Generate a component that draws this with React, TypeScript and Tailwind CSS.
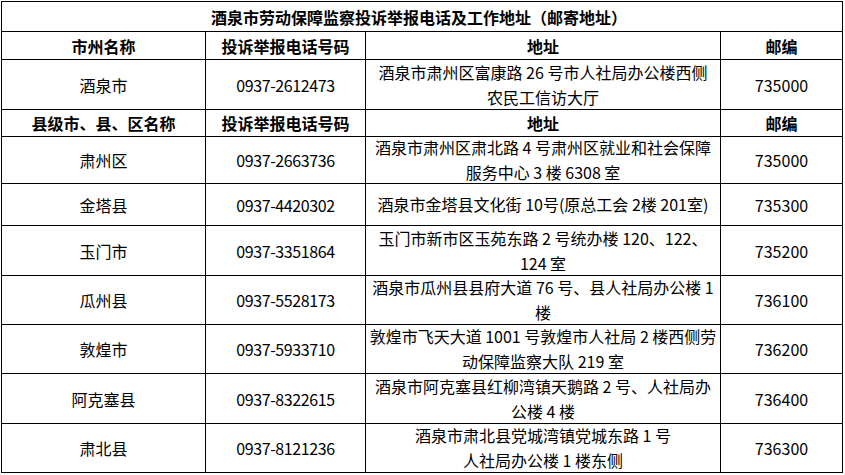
import React from "react";

type Row = { name: string; phone: string; addr: string[]; zip: string };

const rows: Row[] = [
  { name: "肃州区", phone: "0937-2663736", addr: ["酒泉市肃州区肃北路 4 号肃州区就业和社会保障", "服务中心 3 楼 6308 室"], zip: "735000" },
  { name: "金塔县", phone: "0937-4420302", addr: ["酒泉市金塔县文化街 10号(原总工会 2楼 201室)"], zip: "735300" },
  { name: "玉门市", phone: "0937-3351864", addr: ["玉门市新市区玉苑东路 2 号统办楼 120、122、", "124 室"], zip: "735200" },
  { name: "瓜州县", phone: "0937-5528173", addr: ["酒泉市瓜州县县府大道 76 号、县人社局办公楼 1", "楼"], zip: "736100" },
  { name: "敦煌市", phone: "0937-5933710", addr: ["敦煌市飞天大道 1001 号敦煌市人社局 2 楼西侧劳", "动保障监察大队 219 室"], zip: "736200" },
  { name: "阿克塞县", phone: "0937-8322615", addr: ["酒泉市阿克塞县红柳湾镇天鹅路 2 号、人社局办", "公楼 4 楼"], zip: "736400" },
  { name: "肃北县", phone: "0937-8121236", addr: ["酒泉市肃北县党城湾镇党城东路 1 号", "人社局办公楼 1 楼东侧"], zip: "736300" },
];

function Cell({ children, bold, span }: { children: React.ReactNode; bold?: boolean; span?: boolean }) {
  return (
    <div
      className={
        "bg-white flex flex-col items-center justify-center text-center whitespace-nowrap overflow-visible " +
        (bold ? "font-bold " : "") +
        (span ? "col-span-4 " : "")
      }
    >
      {children}
    </div>
  );
}

function Addr({ lines }: { lines: string[] }) {
  return (
    <Cell>
      {lines.map((l, i) => (
        <div key={i} className="leading-[25px]">
          {l}
        </div>
      ))}
    </Cell>
  );
}

export default function App() {
  return (
    <div className="w-[845px] h-[475px] bg-white pt-px pl-px font-['Noto_Sans_CJK_SC',sans-serif] text-[16px] text-black leading-[24px]">
      <div className="w-[842px] bg-black p-px grid gap-px grid-cols-[203px_159px_354px_121px] grid-rows-[29px_27px_49px_26px_46px_41px_49px_48px_48px_49px_48px]">
        <Cell bold span>
          <span className="pr-[6px]">酒泉市劳动保障监察投诉举报电话及工作地址（邮寄地址）</span>
        </Cell>
        <Cell bold>市州名称</Cell>
        <Cell bold>投诉举报电话号码</Cell>
        <Cell bold>地址</Cell>
        <Cell bold>邮编</Cell>

        <Cell>酒泉市</Cell>
        <Cell><span className="tracking-[-0.4px]">0937-2612473</span></Cell>
        <Addr lines={["酒泉市肃州区富康路 26 号市人社局办公楼西侧", "农民工信访大厅"]} />
        <Cell>735000</Cell>

        <Cell bold>县级市、县、区名称</Cell>
        <Cell bold>投诉举报电话号码</Cell>
        <Cell bold>地址</Cell>
        <Cell bold>邮编</Cell>

        {rows.map((r) => (
          <React.Fragment key={r.name}>
            <Cell>{r.name}</Cell>
            <Cell><span className="tracking-[-0.4px]">{r.phone}</span></Cell>
            <Addr lines={r.addr} />
            <Cell>{r.zip}</Cell>
          </React.Fragment>
        ))}
      </div>
    </div>
  );
}
